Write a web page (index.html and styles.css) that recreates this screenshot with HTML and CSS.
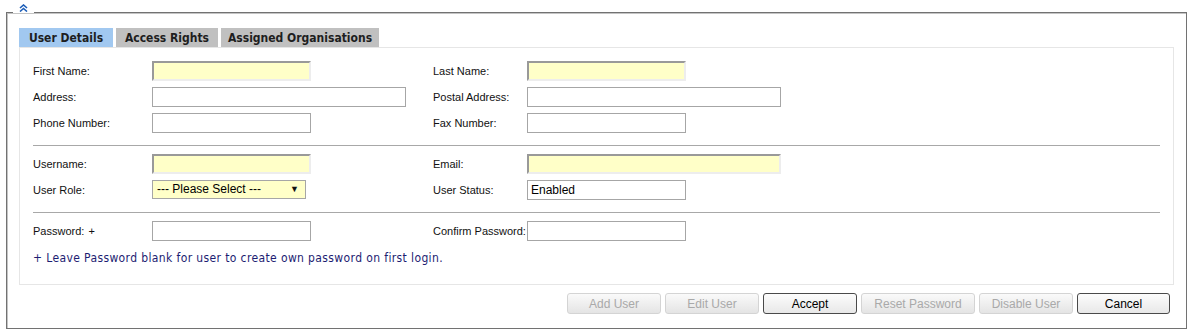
FILE: index.html
```html
<!DOCTYPE html>
<html lang="en">
<head>
    <meta charset="UTF-8">
    <title>User Details</title>
    <link rel="stylesheet" href="styles.css">
</head>
<body>
    <div class="wrap">
        <fieldset class="box">
            <legend class="toggle">
                <svg width="9" height="8" viewBox="0 0 9 8">
                    <path d="M1 4 L4.5 1 L8 4 M1 7.5 L4.5 4.5 L8 7.5" fill="none" stroke="#1c5db8" stroke-width="1.6"/>
                </svg>
            </legend>

            <div class="tabs">
                <div class="tab active" style="width:94px">User Details</div>
                <div class="tab" style="width:102px">Access Rights</div>
                <div class="tab" style="width:158px">Assigned Organisations</div>
            </div>

            <div class="panel">
                <div class="grid">
                    <label>First Name:</label>
                    <div><input class="req short" type="text"></div>
                    <label>Last Name:</label>
                    <div><input class="req short" type="text"></div>

                    <label>Address:</label>
                    <div><input class="long" type="text"></div>
                    <label>Postal Address:</label>
                    <div><input class="long" type="text"></div>

                    <label>Phone Number:</label>
                    <div><input class="short" type="text"></div>
                    <label>Fax Number:</label>
                    <div><input class="short" type="text"></div>
                </div>

                <div class="sep"></div>

                <div class="grid">
                    <label>Username:</label>
                    <div><input class="req short" type="text"></div>
                    <label>Email:</label>
                    <div><input class="req long" type="text"></div>

                    <label>User Role:</label>
                    <div><div class="select">--- Please Select ---<span class="arrow">&#9660;</span></div></div>
                    <label>User Status:</label>
                    <div><input class="short" type="text" value="Enabled"></div>
                </div>

                <div class="sep"></div>

                <div class="grid">
                    <label>Password: <span class="plus">+</span></label>
                    <div><input class="short" type="password"></div>
                    <label>Confirm Password:</label>
                    <div><input class="short" type="password"></div>
                </div>

                <p class="note">+ Leave Password blank for user to create own password on first login.</p>
            </div>

            <div class="actions">
                <button class="btn" disabled style="width:94px">Add User</button>
                <button class="btn" disabled style="width:94px">Edit User</button>
                <button class="btn on" style="width:94px">Accept</button>
                <button class="btn" disabled style="width:114px">Reset Password</button>
                <button class="btn" disabled style="width:94px">Disable User</button>
                <button class="btn on" style="width:93px">Cancel</button>
            </div>
        </fieldset>
    </div>
</body>
</html>
```

FILE: styles.css
```css
body{
    margin: 0;
    background-color: #fff;
    font-family: 'Liberation Sans', Arial, sans-serif;
}

.wrap{
    padding: 4px 5px 0 6px;
}

.box{
    margin: 0;
    padding: 8px 12px 14px 12px;
    border: 1px solid #727272;
    box-shadow: inset 1px 1px 0 #c4c4c4;
    min-width: 0;
}

.toggle{
    margin-left: -6px;
    padding: 0 6px;
    height: 16px;
}
.toggle svg{
    display: block;
}

.tabs{
    display: flex;
    gap: 3px;
}
.tab{
    height: 19px;
    line-height: 20px;
    text-align: center;
    background-color: #c0c0c0;
    color: #1e1e1e;
    font-family: 'DejaVu Sans Condensed', 'DejaVu Sans', sans-serif;
    font-weight: bold;
    font-size: 12px;
}
.tab.active{
    background-color: #a1c8f0;
}

.panel{
    border: 1px solid #e6e6e6;
    padding: 13px 13px 0 13px;
    height: 223px;
}

.grid{
    display: grid;
    grid-template-columns: 119px 281px 94px 1fr;
    grid-auto-rows: 26px;
}
.grid label{
    font-size: 11px;
    color: #111;
    line-height: 20px;
}
.plus{
    margin-left: 1px;
}

input{
    box-sizing: border-box;
    height: 20px;
    margin: 0;
    padding: 0 3px;
    border: 1px solid #a6a6a6;
    font-family: 'Liberation Sans', Arial, sans-serif;
    font-size: 12px;
    color: #000;
    background-color: #fff;
    display: block;
}
input.short{
    width: 159px;
}
input.long{
    width: 254px;
}
input.req{
    background-color: #ffffc8;
    border-width: 2px;
    border-color: #999 #ededed #ededed #999;
}

.select{
    box-sizing: border-box;
    width: 154px;
    height: 19px;
    border: 1px solid #a6a6a6;
    background-color: #ffffc8;
    font-size: 12px;
    line-height: 16px;
    padding-left: 4px;
    position: relative;
}
.arrow{
    position: absolute;
    right: 6px;
    top: 0;
    font-size: 9px;
    color: #111;
}

.sep{
    height: 1px;
    background-color: #a8a8a8;
    margin: 6px 0 8px 0;
}

.note{
    margin: 4px 0 0 0;
    font-family: 'DejaVu Sans Condensed', 'DejaVu Sans', sans-serif;
    font-size: 12px;
    letter-spacing: 0.38px;
    color: #1d1d72;
}

.actions{
    display: flex;
    justify-content: flex-end;
    gap: 4px;
    margin-top: 8px;
    padding-right: 4px;
}
.btn{
    height: 21px;
    padding: 0;
    border-radius: 3px;
    border: 1px solid #d4d4d4;
    background: linear-gradient(#fafafa, #e4e4e4);
    font-family: 'Liberation Sans', Arial, sans-serif;
    font-size: 12px;
    color: #a9a9a9;
}
.btn.on{
    border-color: #4a4a4a;
    color: #000;
    background: linear-gradient(#fcfcfc, #e8e8e8);
}
```
